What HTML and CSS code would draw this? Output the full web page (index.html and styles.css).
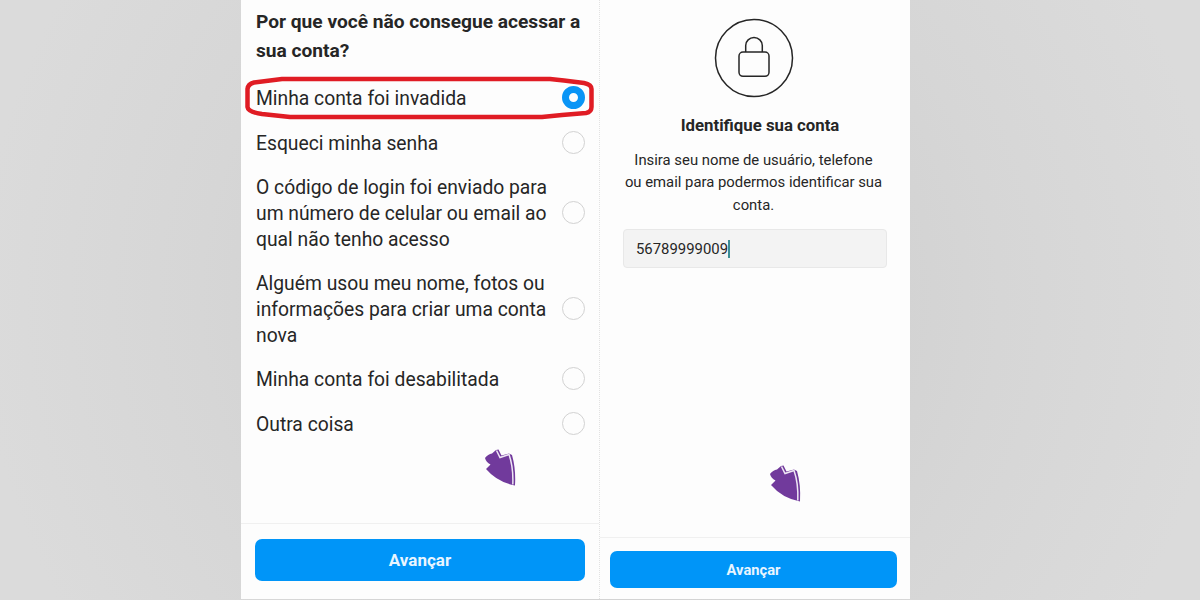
FILE: index.html
```html
<!DOCTYPE html>
<html lang="pt-BR">
<head>
    <meta charset="UTF-8">
    <meta name="viewport" content="width=device-width, initial-scale=1.0">
    <title>Recuperar conta</title>
    <link rel="stylesheet" href="styles.css">
</head>
<body>
    <div class="screens">
        <div class="screen reason">
            <div class="content">
                <h2>Por que você não consegue acessar a<br>sua conta?</h2>
                <div class="options">
                    <div class="option">
                        <span>Minha conta foi invadida</span>
                        <i class="radio checked"></i>
                        <svg class="highlight" width="352" height="46" viewBox="0 0 352 46">
                            <path d="M38 4 H306 L320 5.500 L340 8 Q347.500 9.500 347.500 14 V32 Q347.500 37 342 38 L318 40 L298 42 H46 L18 39 Q4 37 3.500 32 V14 Q4 9 10 7.500 Z" fill="none" stroke="#e01c24" stroke-width="4.500" stroke-linejoin="round"/>
                        </svg>
                    </div>
                    <div class="option">
                        <span>Esqueci minha senha</span>
                        <i class="radio"></i>
                    </div>
                    <div class="option">
                        <span>O código de login foi enviado para<br>um número de celular ou email ao<br>qual não tenho acesso</span>
                        <i class="radio"></i>
                    </div>
                    <div class="option">
                        <span>Alguém usou meu nome, fotos ou<br>informações para criar uma conta<br>nova</span>
                        <i class="radio"></i>
                    </div>
                    <div class="option">
                        <span>Minha conta foi desabilitada</span>
                        <i class="radio"></i>
                    </div>
                    <div class="option">
                        <span>Outra coisa</span>
                        <i class="radio"></i>
                    </div>
                </div>
            </div>
            <div class="footer">
                <button type="button">Avançar</button>
            </div>
            <svg class="arrow" width="32" height="38" viewBox="0 0 32 38">
                <path d="M12 1 L14.500 0.500 L17.500 6.500 L25 4.500 L28 6 Q32 20 31 36.500 Q13 33 2 20 L6.500 15.500 Q2 13 1 9 Q4 5 8 4.500 Z" fill="#713a9c"/>
                <path d="M12.500 1.500 L16 8.500 L25 5.500 Q29.500 18 28.800 35.500" fill="none" stroke="#eee6f4" stroke-width="1.500"/>
            </svg>
        </div>

        <div class="screen identify">
            <div class="content">
                <svg class="lock" width="80" height="80" viewBox="0 0 80 80" fill="none" stroke="#262626">
                    <circle cx="40" cy="40" r="38.500" stroke-width="1.500"/>
                    <rect x="25" y="34" width="30" height="24.300" rx="4" stroke-width="1.500"/>
                    <path d="M31.700 34 V27.500 A8.300 8 0 0 1 48.300 27.500 V34" stroke-width="1.500"/>
                </svg>
                <h3>Identifique sua conta</h3>
                <p>Insira seu nome de usuário, telefone<br>ou email para podermos identificar sua<br>conta.</p>
                <div class="field">56789999009<span class="caret"></span></div>
            </div>
            <div class="footer">
                <button type="button">Avançar</button>
            </div>
            <svg class="arrow" width="32" height="38" viewBox="0 0 32 38">
                <path d="M12 1 L14.500 0.500 L17.500 6.500 L25 4.500 L28 6 Q32 20 31 36.500 Q13 33 2 20 L6.500 15.500 Q2 13 1 9 Q4 5 8 4.500 Z" fill="#713a9c"/>
                <path d="M12.500 1.500 L16 8.500 L25 5.500 Q29.500 18 28.800 35.500" fill="none" stroke="#eee6f4" stroke-width="1.500"/>
            </svg>
        </div>
    </div>
</body>
</html>
```
FILE: styles.css
```css
* {
    box-sizing: border-box;
}
body {
    margin: 0;
    height: 600px;
    overflow: hidden;
    background: radial-gradient(circle at 50% 50%, #d0d0d0 200px, #d6d6d6 400px, #dbdbdb 620px);
    font-family: Roboto, sans-serif;
    color: #262626;
}
.screens {
    display: flex;
    width: 669px;
    height: 599px;
    margin-left: 241px;
}
.screen {
    position: relative;
    display: flex;
    flex-direction: column;
    background-color: #fdfdfd;
}
.content {
    flex: 1;
}
.reason {
    width: 359px;
    border-right: 1px dotted #e2e2e2;
}
.reason .content {
    padding: 8px 14px 0 15px;
}
h2 {
    margin: 0 0 20px;
    font-size: 19.15px;
    line-height: 28.6px;
    font-weight: 700;
    white-space: nowrap;
}
.options {
    display: flex;
    flex-direction: column;
    gap: 19.2px;
}
.option {
    position: relative;
    display: flex;
    justify-content: space-between;
    align-items: center;
    font-size: 19.3px;
    line-height: 25.6px;
    white-space: nowrap;
}
.option span {
    margin: 0.6px 0 -0.6px;
}
.radio {
    width: 23px;
    height: 23px;
    margin: -1px 0 0;
    border: 1px solid #d2d2d2;
    border-radius: 50%;
}
.radio.checked {
    margin: 0;
    border: 7.5px solid #0a95f6;
}
.highlight {
    position: absolute;
    left: -12.5px;
    top: -10px;
}
.footer {
    border-top: 1px solid #f0f0f0;
}
.reason .footer {
    height: 76px;
    padding: 15px 14px 0;
}
button {
    display: block;
    width: 100%;
    border: none;
    border-radius: 7px;
    background-color: #0095f8;
    color: #e9f5ff;
    font-family: inherit;
    font-weight: 700;
}
.reason button {
    height: 42px;
    font-size: 17px;
}
.arrow {
    position: absolute;
}
.reason .arrow {
    left: 243px;
    top: 449px;
}
.identify {
    width: 310px;
}
.identify .content {
    display: flex;
    flex-direction: column;
    align-items: center;
    padding: 18px 3px 0 0;
}
h3 {
    margin: 16px -10px 13px 3px;
    font-size: 16.8px;
    line-height: 22px;
    font-weight: 700;
    white-space: nowrap;
}
p {
    margin: 0;
    font-size: 14.85px;
    line-height: 22.4px;
    text-align: center;
    white-space: nowrap;
}
.field {
    display: flex;
    align-items: center;
    align-self: stretch;
    height: 39px;
    margin: 13px 20px 0 23px;
    padding: 1px 0 0 12px;
    border: 1px solid #e8e8e8;
    border-radius: 4px;
    background-color: #f3f3f3;
    font-size: 14.9px;
}
.caret {
    width: 2px;
    height: 18px;
    background-color: #3d8e96;
}
.identify .footer {
    height: 62px;
    padding: 13px 13px 0 10px;
}
.identify button {
    height: 37px;
    padding-top: 2px;
    font-size: 14.7px;
}
.identify .arrow {
    left: 169px;
    top: 465px;
}
```
